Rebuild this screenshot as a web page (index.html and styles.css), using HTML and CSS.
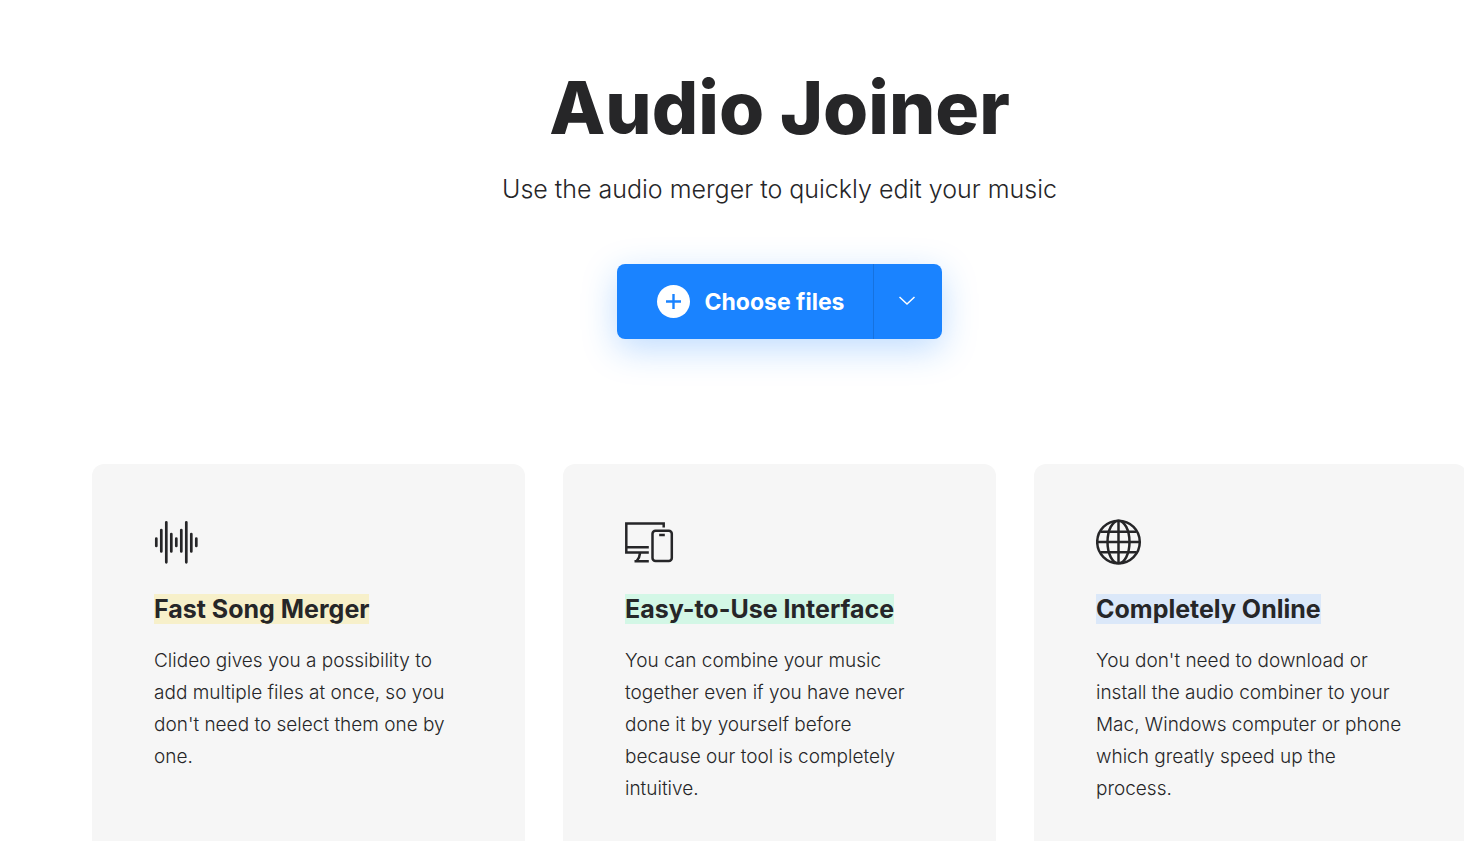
FILE: index.html
```
<!DOCTYPE html>
<html lang="en">
<head>
    <meta charset="UTF-8">
    <meta name="viewport" content="width=device-width, initial-scale=1.0">
    <title>Audio Joiner</title>
    <link rel="stylesheet" href="styles.css">
</head>
<body>
    <main class="container">
        <section class="hero">
            <h1>Audio Joiner</h1>
            <p class="subtitle">Use the audio merger to quickly edit your music</p>
            <div class="upload">
                <button type="button" class="choose-btn">
                    <svg class="plus-icon" viewBox="0 0 33 33" aria-hidden="true">
                        <circle cx="16.5" cy="16.5" r="16.5" fill="#fff"/>
                        <path d="M16.5 9v15M9 16.5h15" stroke="#1a83ff" stroke-width="2.4"/>
                    </svg>
                    Choose files
                </button>
                <button type="button" class="more-btn" aria-label="More sources">
                    <svg class="arrow-icon" viewBox="0 0 18 12" aria-hidden="true">
                        <path d="M.5 1l7.5 7 7.5-7" fill="none" stroke="#fff" stroke-width="1.5"/>
                    </svg>
                </button>
            </div>
        </section>

        <section class="features">
            <article class="card">
                <svg class="card-icon" viewBox="0 0 50 50" aria-hidden="true">
                    <path d="M2.3 21.5V29M7.3 13v21.5M12.3 5.3v40M17.3 17v17.5M22.3 21.5V29M27.3 13v21.5M32.3 5.3v40M37.3 17v17.5M42.3 21.5V29" fill="none" stroke="#262628" stroke-width="2.7" stroke-linecap="round"/>
                </svg>
                <h2><span class="yellow">Fast Song Merger</span></h2>
                <p>Clideo gives you a possibility to add multiple files at once, so you don't need to select them one by one.</p>
            </article>

            <article class="card">
                <svg class="card-icon" viewBox="0 0 50 50" aria-hidden="true">
                    <g fill="none" stroke="#262628" stroke-width="2.5">
                        <path d="M38.7 10.5v-4H1.3v29h22.5M1.3 30.3h22.5M15.2 35.5c-.4 3.5-1.6 6.3-3.4 8.3M9.5 44.2h14.3"/>
                        <rect x="27.5" y="13.8" width="19.3" height="30.3" rx="3"/>
                        <path d="M34.2 18h5.6"/>
                    </g>
                </svg>
                <h2><span class="green">Easy-to-Use Interface</span></h2>
                <p>You can combine your music together even if you have never done it by yourself before because our tool is completely intuitive.</p>
            </article>

            <article class="card">
                <svg class="card-icon" viewBox="0 0 50 50" aria-hidden="true">
                    <g fill="none" stroke="#262628" stroke-width="2.5">
                        <circle cx="22.5" cy="25" r="21.3"/>
                        <ellipse cx="22.5" cy="25" rx="11" ry="21.3"/>
                        <path d="M22.5 4v42M1 25h43M4.5 14.8h36M4.5 35.2h36"/>
                    </g>
                </svg>
                <h2><span class="blue">Completely Online</span></h2>
                <p>You don't need to download or install the audio combiner to your Mac, Windows computer or phone which greatly speed up the process.</p>
            </article>
        </section>
    </main>
</body>
</html>
```
FILE: styles.css
```
* {
    box-sizing: border-box;
}
body {
    margin: 0;
    font-family: Inter, Arial, sans-serif;
    color: #262628;
    background-color: #fff;
    overflow-x: hidden;
}
/* hide the scrollbar so the cards keep the full width */
html {
    scrollbar-width: none;
}
.container {
    margin: 0 -3px 0 92px;
}
.hero {
    display: flex;
    flex-direction: column;
    align-items: center;
    padding: 62px 0 125px;
}
h1 {
    margin: 0;
    font-size: 73px;
    font-weight: 800;
    line-height: 92px;
}
.subtitle {
    margin: 17px 0 57px;
    font-size: 25px;
    font-weight: 300;
    line-height: 36px;
}
.upload {
    display: flex;
    height: 75px;
    border-radius: 8px;
    box-shadow: 0 10px 35px rgba(26, 131, 255, 0.28);
}
.choose-btn,
.more-btn {
    display: flex;
    align-items: center;
    border: none;
    background-color: #1a83ff;
    color: #fff;
    font-family: inherit;
    cursor: pointer;
}
.choose-btn {
    gap: 15px;
    padding: 0 29px 0 40px;
    border-radius: 8px 0 0 8px;
    font-size: 23px;
    font-weight: 700;
}
.more-btn {
    justify-content: center;
    width: 69px;
    border-left: 1px solid #1672df;
    border-radius: 0 8px 8px 0;
}
.choose-btn:hover,
.more-btn:hover {
    background-color: #1672df;
}
.plus-icon {
    width: 33px;
    height: 33px;
}
.arrow-icon {
    width: 18px;
    height: 12px;
}
.features {
    display: grid;
    grid-template-columns: repeat(3, 1fr);
    gap: 38px;
}
.card {
    padding: 53px 64px 62px 62px;
    border-radius: 12px;
    background-color: #f6f6f6;
}
.card-icon {
    display: block;
    width: 50px;
    height: 50px;
}
.card h2 {
    margin: 24px 0 18px;
    font-size: 25px;
    font-weight: 700;
    line-height: 36px;
}
.card p {
    margin: 0;
    font-size: 19px;
    font-weight: 300;
    line-height: 32px;
}
.yellow {
    background-color: #f7f0ca;
}
.green {
    background-color: #d3f7e6;
}
.blue {
    background-color: #dbe8f9;
}
```
